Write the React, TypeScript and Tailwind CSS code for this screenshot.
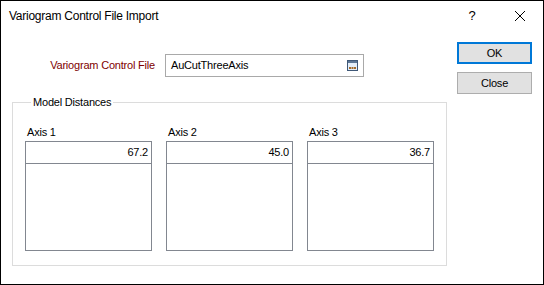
import React from 'react';

const axes = [
  { label: 'Axis 1', value: '67.2' },
  { label: 'Axis 2', value: '45.0' },
  { label: 'Axis 3', value: '36.7' },
];

const BrowseIcon = () => (
  <svg width="11" height="11" viewBox="0 0 11 11" className="shrink-0">
    <rect x="0.5" y="0.5" width="10" height="10" fill="#e4eef9" stroke="#3f5877" />
    <rect x="1" y="1" width="9" height="2" fill="#5d7796" />
    <rect x="2" y="7" width="2" height="2" fill="#a36b2b" />
    <rect x="4.5" y="7" width="2" height="2" fill="#a36b2b" />
    <rect x="7" y="7" width="2" height="2" fill="#a36b2b" />
  </svg>
);

const AxisBox = ({ label, value }: { label: string; value: string }) => (
  <div className="w-[127px] flex flex-col">
    <div className="leading-[14px] pl-[2px] mb-[2px]">{label}</div>
    <div className="h-[110px] border border-[#828790] flex flex-col">
      <div className="h-[22px] border-b border-[#828790] flex items-center justify-end pr-[3px]">
        {value}
      </div>
    </div>
  </div>
);

export default function App() {
  return (
    <div className="w-[544px] h-[285px] bg-white border border-black flex flex-col font-['Liberation_Sans',Arial,sans-serif] text-[11px] tracking-[-0.2px] text-black">
      {/* Title bar */}
      <div className="h-[30px] flex items-center shrink-0">
        <div className="flex-1 pl-[8px] text-[12px] tracking-[-0.25px]">Variogram Control File Import</div>
        <div className="w-[50px] h-full flex items-center justify-center text-[13px]">?</div>
        <div className="w-[46px] h-full flex items-center justify-center">
          <svg width="10" height="10" viewBox="0 0 10 10">
            <path d="M0 0 L10 10 M10 0 L0 10" stroke="#000" strokeWidth="1" />
          </svg>
        </div>
      </div>

      <div className="flex flex-1">
        {/* Left side */}
        <div className="w-[446px] pl-[11px] pt-[23px]">
          <div className="flex items-center h-[23px]">
            <div className="w-[153px] pr-[10px] text-right text-[#800000]">Variogram Control File</div>
            <div className="w-[199px] h-[23px] border border-[#a9a9a9] flex items-center pl-[5px] pr-[5px]">
              <span className="flex-1">AuCutThreeAxis</span>
              <BrowseIcon />
            </div>
          </div>

          <fieldset className="mt-[18px] w-[435px] h-[171px] border border-[#dcdcdc] px-[12px]">
            <legend className="ml-[6px] px-[2px] leading-[14px]">Model Distances</legend>
            <div className="flex gap-[14px] pt-[16px]">
              {axes.map((a) => (
                <AxisBox key={a.label} label={a.label} value={a.value} />
              ))}
            </div>
          </fieldset>
        </div>

        {/* Buttons */}
        <div className="pl-[10px] pt-[11px] flex flex-col gap-[8px]">
          <button className="w-[75px] h-[22px] border-2 border-[#0078d7] bg-[#e1e1e1] flex items-center justify-center">
            OK
          </button>
          <button className="w-[75px] h-[22px] border border-[#adadad] bg-[#e1e1e1] flex items-center justify-center">
            Close
          </button>
        </div>
      </div>
    </div>
  );
}
